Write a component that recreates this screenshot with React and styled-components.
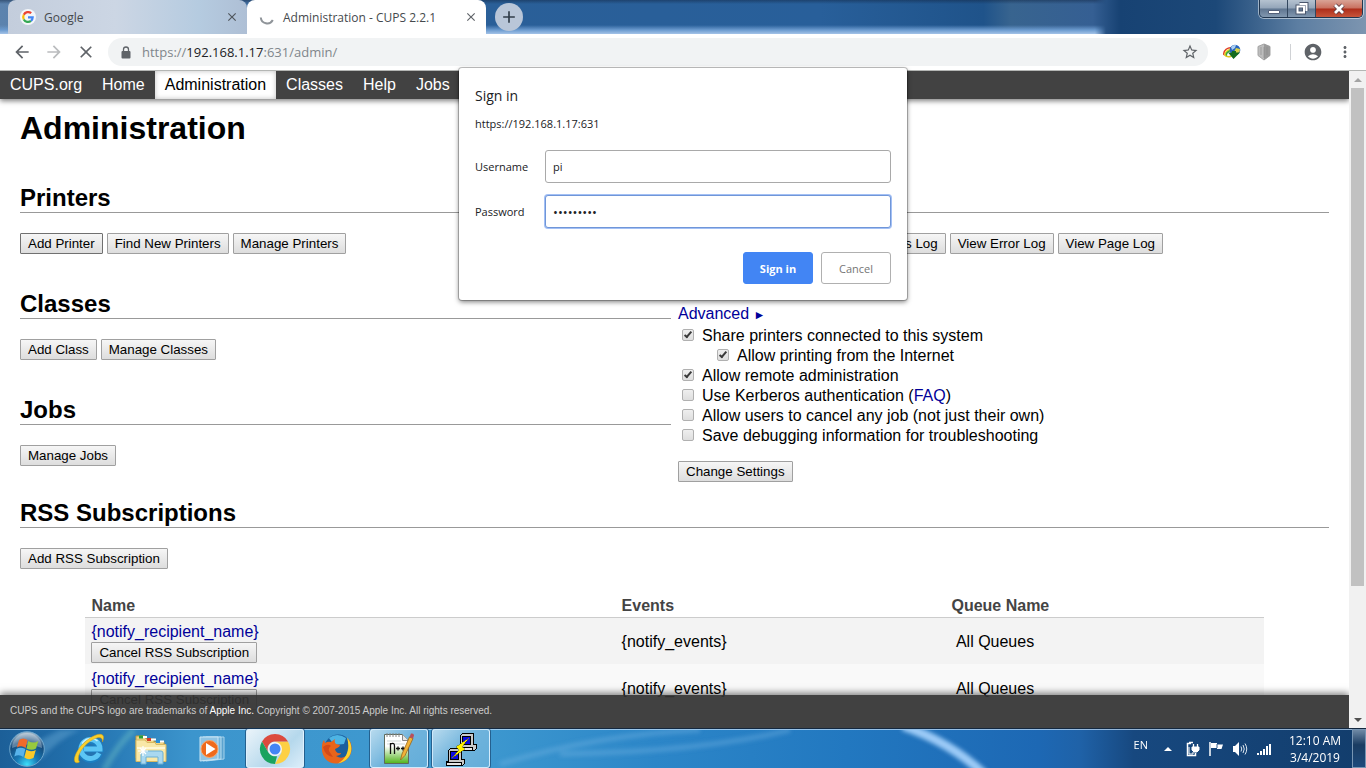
import React from "react";
import styled, { createGlobalStyle, css } from "styled-components";
import {
  MdArrowBack,
  MdArrowForward,
  MdClose,
  MdStarBorder,
  MdAccountCircle,
  MdMoreVert,
  MdAdd,
} from "react-icons/md";

const ui = `"Open Sans", "Noto Sans", sans-serif`;
const sans = `"Liberation Sans", Arial, sans-serif`;

const GlobalStyle = createGlobalStyle`
  *, *::before, *::after { box-sizing: border-box; }
  body { margin: 0; font-family: ${sans}; font-size: 16px; color: #000; background: #fff; }
  h1, h2, p { margin: 0; }
  button, input { font-family: inherit; }
`;

const Desktop = styled.div`
  display: flex;
  flex-direction: column;
  height: 100vh;
  overflow: hidden;
`;

/* ---------- window frame ---------- */

const TitleBar = styled.header`
  display: flex;
  align-items: stretch;
  flex: none;
  height: 34px;
  padding-left: 8px;
  position: relative;
  isolation: isolate;
  font-family: ${ui};
  background: linear-gradient(90deg, #5c83ae 0, #2a5f98 36%, #285f9a 60%, #1f538a 72%, #38648f 74%, #355f93 80%, #174273 82%, #1c4878 89%, #5c7ea2 95%, #7d95b0 100%);
  &::before {
    content: "";
    position: absolute;
    inset: 0 19% 0 0;
    z-index: -1;
    background: linear-gradient(180deg, rgba(20, 40, 70, 0.5) 0, transparent 4px, transparent 25px, #6c9bcf 30px, #a4c3e8 34px);
    mask-image: linear-gradient(90deg, #000 99%, transparent);
  }
`;

const Tab = styled.div`
  display: flex;
  align-items: center;
  gap: 8px;
  width: 239px;
  padding: 0 9px 0 12px;
  font-size: 12px;
  color: #45494d;
  border-radius: 8px 8px 0 0;
  background: ${(p) =>
    p.$active ? "#fff" : "linear-gradient(90deg, #c3cddc, #ccd6e4 45%, #b5cbe0 80%, #aebfd5)"};
  button path { stroke: currentColor; }
`;

const TabTitle = styled.span`
  flex: 1;
  white-space: nowrap;
`;

const IconButton = styled.button`
  display: flex;
  align-items: center;
  justify-content: center;
  flex: none;
  width: ${(p) => p.$size || 20}px;
  height: ${(p) => p.$size || 20}px;
  padding: 0;
  border: 0;
  background: none;
  color: ${(p) => p.$tone || "#5f6368"};
  svg { flex: none; }
`;

const NewTab = styled(IconButton)`
  align-self: center;
  margin-left: 9px;
  border-radius: 50%;
  background: #b9c6d8;
  color: #303c48;
  path { stroke: currentColor; }
`;

const WindowButtons = styled.div`
  display: flex;
  height: 18px;
  margin: 0 3px 0 auto;
  border: 1px solid #21364f;
  border-top: 0;
  border-radius: 0 0 5px 5px;
  box-shadow: 0 0 0 1px rgba(255, 255, 255, 0.5);
  overflow: hidden;
`;

const WindowButton = styled.button`
  display: flex;
  align-items: center;
  justify-content: center;
  width: ${(p) => (p.$close ? 46 : 28)}px;
  padding: 0;
  border: 0;
  border-right: ${(p) => (p.$close ? "0" : "1px solid #33475f")};
  background: ${(p) =>
    p.$close
      ? "linear-gradient(#d9a396, #c9705f 48%, #ad2d1a 52%, #c8553a)"
      : "linear-gradient(#b5c2d0, #93a5b9 48%, #5f7590 52%, #8298b0)"};
`;

/* ---------- browser toolbar ---------- */

const Toolbar = styled.div`
  display: flex;
  align-items: center;
  flex: none;
  height: 37px;
  padding: 0 11px 0 12px;
  background: #fff;
  border-bottom: 1px solid #b4b6b4;
  font-family: ${ui};
`;

const NavButtons = styled.div`
  display: flex;
  gap: 12px;
`;

const Omnibox = styled.div`
  display: flex;
  align-items: center;
  flex: 1;
  height: 28px;
  margin: 0 14px 0 12px;
  padding: 0 8px 0 13px;
  border-radius: 14px;
  background: #f1f3f4;
  color: #5f6368;
`;

const Address = styled.span`
  flex: 1;
  margin-left: 11px;
  font-size: 13px;
  color: #80868b;
  b { font-weight: 400; color: #202124; }
`;

const Extensions = styled.div`
  display: flex;
  align-items: center;
  gap: 12px;
`;

const Divider = styled.span`
  width: 1px;
  height: 16px;
  margin-left: 4px;
  background: #d0d2d5;
`;

/* ---------- page ---------- */

const Viewport = styled.div`
  display: flex;
  flex: 1;
  min-height: 0;
  position: relative;
`;

const Page = styled.div`
  flex: 1;
  min-width: 0;
  position: relative;
  overflow: hidden;
`;

const SiteNav = styled.nav`
  display: flex;
  height: 28px;
  background: #424242;
  box-shadow: 0 2px 5px rgba(0, 0, 0, 0.5);
`;

const NavLink = styled.a`
  padding: 0 10px;
  line-height: 27px;
  text-decoration: none;
  color: ${(p) => (p.$active ? "#000" : "#fff")};
  ${(p) => p.$active && css`background: #fff; box-shadow: inset 0 0 5px rgba(0, 0, 0, 0.25);`}
`;

const Body = styled.main`
  padding: 10px 20px;
`;

const PageTitle = styled.h1`
  font-size: 32px;
  line-height: 39px;
`;

const Columns = styled.div`
  display: grid;
  grid-template-columns: 1fr 1fr;
  gap: 7px;
`;

const Section = styled.section`
  padding-top: ${(p) => (p.$tight ? 16 : 35)}px;
`;

const SectionTitle = styled.h2`
  margin-bottom: 20px;
  border-bottom: 1px solid #999;
  font-size: 24px;
  line-height: 29px;
`;

const ButtonRow = styled.div`
  display: flex;
  gap: 4px;
`;

const PushButton = styled.button`
  display: block;
  height: 21px;
  padding: 0 7px;
  border: 1px solid ${(p) => (p.$focused ? "#707070" : "#a0a0a0")};
  border-radius: 1px;
  background: linear-gradient(#f6f6f6, #dddddd);
  color: #000;
  white-space: nowrap;
`;

const SettingsTitle = styled.p`
  margin-top: 20px;
  font-weight: 700;
  line-height: 29px;
`;

const Link = styled.a`
  color: #009;
  text-decoration: none;
`;

const Advanced = styled.p`
  line-height: 22px;
  span { font-size: 12px; }
`;

const Option = styled.label`
  display: flex;
  gap: 8px;
  padding-left: ${(p) => (p.$nested ? 39 : 4)}px;
  line-height: 20px;
`;

const Check = styled.input`
  appearance: none;
  position: relative;
  flex: none;
  width: 12px;
  height: 12px;
  margin: 3px 0 0;
  border: 1px solid #b0b0b0;
  border-radius: 2px;
  background: linear-gradient(#efefef, #dedede);
  &:checked::after {
    content: "";
    position: absolute;
    left: 3px;
    top: 0;
    width: 4px;
    height: 8px;
    border: solid #3a3a3a;
    border-width: 0 2px 2px 0;
    transform: rotate(40deg);
  }
`;

const SettingsAction = styled.div`
  margin-top: 15px;
`;

const Subscriptions = styled.table`
  width: 90%;
  margin: 26px auto 0;
  border-collapse: collapse;
  table-layout: fixed;
  th {
    height: 22px;
    padding: 0 6px;
    border-bottom: 1px solid #ccc;
    color: #444;
    text-align: left;
    line-height: 20px;
  }
  td {
    height: 47px;
    padding: 4px 6px 1px;
    line-height: 20px;
  }
  tbody tr { background: #f9f9f9; }
  tbody tr:nth-child(odd) { background: #f3f3f3; }
`;

const Column = styled.col`
  width: ${(p) => p.$share}%;
`;

const RecipientLink = styled(Link)`
  display: block;
`;

const SiteFooter = styled.footer`
  position: absolute;
  inset: auto 0 0;
  height: 33px;
  padding: 0 10px;
  background: rgba(51, 51, 51, 0.93);
  box-shadow: 0 -2px 7px rgba(0, 0, 0, 0.5);
  color: #ccc;
  font-size: 10px;
  line-height: 32px;
  a { color: #fff; text-decoration: none; }
`;

const ScrollTrack = styled.div`
  display: flex;
  flex-direction: column;
  flex: none;
  width: 17px;
  background: #f1f1f1;
`;

const ScrollArrow = styled.span`
  display: flex;
  align-items: center;
  justify-content: center;
  flex: none;
  height: 17px;
`;

const ScrollLane = styled.div`
  flex: 1;
  padding: 0 2px;
`;

const ScrollThumb = styled.div`
  height: 80%;
  background: #c1c1c1;
`;

/* ---------- sign-in dialog ---------- */

const Dialog = styled.form`
  position: absolute;
  top: -3px;
  left: 0;
  right: 0;
  width: 448px;
  margin: 0 auto;
  padding: 16px;
  border-radius: 3px;
  background: #fff;
  box-shadow: 0 0 0 1px rgba(0, 0, 0, 0.22), 0 2px 5px rgba(0, 0, 0, 0.5);
  color: #202124;
  font-family: ${ui};
  font-size: 11px;
`;

const DialogTitle = styled.h2`
  font-size: 14px;
  font-weight: 400;
  line-height: 24px;
`;

const Origin = styled.p`
  margin-bottom: 10px;
  line-height: 32px;
`;

const Field = styled.label`
  display: flex;
  align-items: center;
  margin-bottom: 12px;
`;

const FieldName = styled.span`
  width: 70px;
`;

const FieldInput = styled.input`
  flex: 1;
  min-width: 0;
  height: 33px;
  padding: 0 7px;
  border: 1px solid ${(p) => (p.$focused ? "#7096d8" : "#a9a9a9")};
  border-radius: 3px;
  box-shadow: ${(p) => (p.$focused ? "0 0 0 1px #a3c0f5" : "none")};
  font-size: ${(p) => (p.type === "password" ? 13 : 11)}px;
  color: #202124;
  outline: none;
`;

const DialogActions = styled.div`
  display: flex;
  justify-content: flex-end;
  gap: 8px;
  padding-top: 12px;
`;

const DialogButton = styled.button`
  width: 70px;
  height: 32px;
  padding: 0;
  border: 1px solid ${(p) => (p.$primary ? "#4285f4" : "#b0b0b0")};
  border-radius: 3px;
  background: ${(p) => (p.$primary ? "#4285f4" : "#fff")};
  color: ${(p) => (p.$primary ? "#fff" : "#757575")};
  font-size: 11px;
  font-weight: ${(p) => (p.$primary ? 700 : 500)};
`;

/* ---------- taskbar ---------- */

const Taskbar = styled.footer`
  display: flex;
  align-items: stretch;
  flex: none;
  height: 40px;
  position: relative;
  isolation: isolate;
  padding-left: 9px;
  border-top: 1px solid #14283f;
  box-shadow: inset 0 1px 0 rgba(200, 225, 250, 0.7);
  background: linear-gradient(90deg, #1c5f98 0, #2271ae 6%, #3c95cd 14%, #3f9ad0 34%, #2c86c8 48%, #2278c0 62%, #1d68b4 76%, #1f62a8 79%, #17487f 83%, #123d6c 100%);
  font-family: ${ui};
  color: #fff;
`;

const Streaks = styled.svg`
  position: absolute;
  inset: 1px 0 0;
  width: 100%;
  height: 100%;
  z-index: -1;
`;

const StartButton = styled.button`
  align-self: center;
  width: 36px;
  height: 36px;
  margin-right: 15px;
  padding: 0;
  border: 0;
  background: none;
`;

const Tasks = styled.div`
  display: flex;
  flex: 1;
  gap: 4px;
`;

const Task = styled.button`
  display: flex;
  align-items: center;
  justify-content: center;
  width: 58px;
  padding: 0;
  border: 1px solid transparent;
  border-radius: 3px;
  background: none;
  ${(p) =>
    p.$open &&
    css`
      border-color: rgba(225, 242, 255, 0.85);
      box-shadow: 0 0 0 1px rgba(20, 60, 100, 0.6);
      background: ${p.$current
        ? "linear-gradient(135deg, #eaf4fa, #b5d8ec 60%, #dceefa)"
        : "linear-gradient(135deg, #b7daee, #6fb3dc 50%, #63add9)"};
    `}
`;

const Tray = styled.div`
  display: flex;
  align-items: center;
  gap: 8px;
  svg { display: block; }
`;

const Language = styled.span`
  margin: 0 8px 8px 0;
  font-size: 11px;
`;

const HiddenIcons = styled.button`
  width: 8px;
  margin-right: 4px;
  padding: 0;
  border: 0;
  background: none;
`;

const Clock = styled.div`
  width: 68px;
  font-size: 12px;
  line-height: 17px;
  text-align: center;
`;

const ShowDesktop = styled.button`
  width: 14px;
  margin-left: 3px;
  padding: 0;
  border: 1px solid #7795b3;
  background: linear-gradient(#6f89a5, #1a3c62 40%, #1d4a7c);
`;

/* ---------- drawings ---------- */

const GoogleIcon = () => (
  <svg width="16" height="16" viewBox="0 0 16 16">
    <circle cx="8" cy="8" r="8" fill="#f4f6f9" />
    <g fill="none" strokeWidth="2.2">
      <path d="M11.2 4.2A4.8 4.8 0 0 0 3.8 5.8" stroke="#ea4335" />
      <path d="M3.8 5.8a4.8 4.8 0 0 0 0 4.6" stroke="#fbbc05" />
      <path d="M3.8 10.4a4.8 4.8 0 0 0 7.2 1.5" stroke="#34a853" />
      <path d="M11 11.9a4.8 4.8 0 0 0 1.7-3.6H8" stroke="#4285f4" />
    </g>
  </svg>
);

const Spinner = () => (
  <svg width="16" height="16" viewBox="0 0 16 16">
    <path d="M1.8 8.5a6.4 6.4 0 0 0 12 2.6" fill="none" stroke="#8f9499" strokeWidth="2" />
  </svg>
);

const LockIcon = () => (
  <svg width="10" height="13" viewBox="0 0 10 13">
    <path d="M2.500 6V3.500a2.500 2.500 0 0 1 5 0V6" fill="none" stroke="#5f6368" strokeWidth="1.300" />
    <rect x=".5" y="5" width="9" height="7.500" rx="1" fill="#5f6368" />
  </svg>
);

const DownloaderIcon = () => (
  <svg width="18" height="18" viewBox="0 0 18 18">
    <path d="M1 12a7 6 0 0 1 9-7" fill="none" stroke="#e03a20" strokeWidth="1.5" />
    <path d="M2.3 12.6a6 5 0 0 1 7-6" fill="none" stroke="#f0d51c" strokeWidth="1.6" />
    <path d="M3.5 13a5 4 0 0 1 6-5" fill="none" stroke="#38a838" strokeWidth="1.5" />
    <path d="M1.5 12q3 3 7 1" fill="none" stroke="#e0c51c" strokeWidth="1.4" />
    <circle cx="12" cy="7" r="5.3" fill="#2664bd" />
    <path d="M8 4q2-2.500 5-2l-1 3-3 2z" fill="#a9cff3" />
    <path d="M13 5l4 1-.5 3-3 2-2-3z" fill="#d8d24a" />
    <path d="M5 9.500h4V8h4v1.500h4L10.500 16z" fill="#146b1f" />
  </svg>
);

const ShieldIcon = () => (
  <svg width="14" height="18" viewBox="0 0 14 18">
    <path d="M1 3.500 7 1l6 2.500v9L7 17l-6-4.500z" fill="#bdbdbd" stroke="#a4a4a4" />
    <path d="M7 1l6 2.500v9L7 17z" fill="#9b9b9b" />
    <path d="M7 4v11M4 4v8M10 4v8" stroke="#8c8c8c" strokeWidth=".6" />
  </svg>
);

const StartOrb = () => (
  <svg width="36" height="36" viewBox="0 0 36 36">
    <defs>
      <radialGradient id="orb" cx=".5" cy=".95" r=".9">
        <stop offset="0" stopColor="#3de0fb" />
        <stop offset=".35" stopColor="#1879b5" />
        <stop offset=".75" stopColor="#154a7a" />
        <stop offset="1" stopColor="#9ab2c5" />
      </radialGradient>
    </defs>
    <circle cx="18" cy="18" r="17.300" fill="url(#orb)" stroke="#6ea7cd" />
    <path d="M3 17a15 15 0 0 1 30 0q-15-7-30 0z" fill="#fff" opacity=".3" />
    <path d="M10 9q4-3 8.500 0l-1.800 8q-4-3-8.800-.5z" fill="#ef6a2b" />
    <path d="M19.300 10q5 3 10 0l-2.300 7.500q-4 2.500-9.500 0z" fill="#97c93d" />
    <path d="M7.300 18q4-2.500 9 0l-2 8q-4-3-9-.5z" fill="#58b3ea" />
    <path d="M17.300 18.800q4.500 2.700 9.500.2l-2.300 8q-5 2.500-9.200-.5z" fill="#fbc928" />
  </svg>
);

const ExplorerBrowserIcon = () => (
  <svg width="34" height="34" viewBox="0 0 34 34" fill="none">
    <path d="M27.500 21.500A9.500 9.500 0 1 1 28 17H12" stroke="#1c7fc2" strokeWidth="6.500" />
    <path d="M27 21.200A9.500 9.500 0 1 1 28 17H12" stroke="#5cc6f5" strokeWidth="5" />
    <path d="M10 11.500q3.500-5 9-5 4 0 6.500 2.500" stroke="#c4efff" strokeWidth="1.500" />
    <path d="M7.500 30C1 33.500.5 25.500 7 16.500S27-1 31 3.500c1 1.500.5 4-.5 6.500.5-5-3.500-5.500-8.500-3C13 11 3 24 7.500 30z" fill="#f9cf2b" stroke="#d99f10" strokeWidth=".5" />
  </svg>
);

const FolderIcon = () => (
  <svg width="34" height="32" viewBox="0 0 34 32">
    <path d="M2 6V3h9l1 3h8v3h10v16H2z" fill="#f0d585" stroke="#c19b3c" />
    <path d="M5 2.500h4v3H5z" fill="#28a03c" />
    <path d="M13 5h4v3h-4z" fill="#d63a28" />
    <path d="M22 7h4v3h-4z" fill="#2a8fd8" />
    <path d="M9 4h4M17 6.500h5M26 8.500h4" stroke="#fff" strokeWidth="2" />
    <path d="M2 7h9l2 2.500h8l1 2h10v17H2z" fill="#f9e8a8" stroke="#d8b961" />
    <path d="M3 15h28" stroke="#fff7d5" strokeWidth="2" />
    <path d="M7 31V20q0-2 2-2h18q2 0 2 2v11h-5v-7H12v7z" fill="#a9d8f0" stroke="#6bb0d6" />
    <path d="M9 13v10M4 18h10M6 15l6 6M12 15l-6 6" stroke="#fff" strokeWidth="1.200" />
  </svg>
);

const MediaIcon = () => (
  <svg width="30" height="28" viewBox="0 0 30 28">
    <path d="M8 2h18v22L8 26z" fill="#5ba3cf" stroke="#a7d3ec" />
    <path d="M5 2h18v22L5 26z" fill="#72b5dc" stroke="#b6dcf0" />
    <path d="M2 2h18v22L2 26z" fill="#8fc4e4" stroke="#c8e5f4" />
    <circle cx="11.500" cy="14" r="8.500" fill="#ef6a1c" stroke="#f7a76b" />
    <path d="M8 8v12l9.500-6z" fill="#fff" />
  </svg>
);

const ChromeIcon = () => (
  <svg width="32" height="32" viewBox="0 0 32 32">
    <path d="M16 8.500h13A15 15 0 0 1 16 31l6.500-11.200z" fill="#fdd044" />
    <path d="M3 8.500A15 15 0 0 1 29 8.500H16a7.500 7.500 0 0 0-6.500 11.200z" fill="#dc4a3d" />
    <path d="M3 8.500l6.500 11.200q2.500 4 8.500 3.600L16 31A15 15 0 0 1 3 8.500z" fill="#1aa35f" />
    <circle cx="16" cy="16" r="7" fill="#f5f5f5" />
    <circle cx="16" cy="16" r="5.500" fill="#4485f4" />
  </svg>
);

const FirefoxIcon = () => (
  <svg width="32" height="32" viewBox="0 0 32 32">
    <circle cx="17" cy="15" r="13.500" fill="#1b5f9e" />
    <path d="M8 5q8-6 17 0l-2 6-10 1z" fill="#4db4e4" />
    <path d="M27 5c7 9 4 24-11 25.500C6 31 0 23 1 13c0-4 2-6 2-6l1 3q3-2 6-1l4-3q-1 3 1 5l4 1q0 2-5 4 1 5 6 4 0 2-5 3 6 4 11-1c4-5 3-12 1-17.500z" fill="#e8641b" />
    <path d="M26 4.500c8 9 5 23-9 26 10-6 12-16 9-26z" fill="#fbd32d" />
    <path d="M2 14q5-4 8-1-3 2-2 5l4 6q-8-1-10-10z" fill="#d34a18" />
  </svg>
);

const EditorIcon = () => (
  <svg width="32" height="34" viewBox="0 0 32 34">
    <defs>
      <linearGradient id="page" x1="0" y1="0" x2="0" y2="1">
        <stop offset=".4" stopColor="#fff" />
        <stop offset="1" stopColor="#4fb31a" />
      </linearGradient>
    </defs>
    <path d="M1.500 2.500h18l6 6v23h-24z" fill="url(#page)" stroke="#5d6a5d" />
    <path d="M19.500 2.500v6h6" fill="#e6e6e6" stroke="#888" />
    <path d="M4 1v4M7 1v4M10 1v4M13 1v4M16 1v4" stroke="#888" />
    <path d="M4 9h14M4 12h18" stroke="#b9c9c9" strokeWidth=".7" />
    <path d="M7.500 11v11M7.500 12q4-2 4 2v8M13 16.500h4M15 14.500v4M18 16.500h4M20 14.500v4" stroke="#111" strokeWidth="1.300" fill="none" />
    <path d="M17.500 28l1.500-6 7.500-17 3.500 1.500-8 17z" fill="#f1b338" stroke="#98651a" strokeWidth=".8" />
    <path d="M26.500 5L28 1.500q3-.5 3 2L30 6.500z" fill="#b8505a" />
  </svg>
);

const TerminalIcon = () => (
  <svg width="34" height="34" viewBox="0 0 34 34" shapeRendering="crispEdges">
    <g stroke="#000">
      <path d="M16.500 3.500l2-2h11v11h3v4l-2 2h-15v-4h1z" fill="#c9c9c9" />
      <path d="M18.500 4.500h8v8h-8z" fill="#0a0ae0" />
      <path d="M15.500 15.500h13v3h-13z" fill="#e6e6e6" />
      <path d="M4.500 18.500l2-2h11v11h3v4l-2 2h-16v-4h2z" fill="#c9c9c9" />
      <path d="M6.500 19.500h8v8h-8z" fill="#0a0ae0" />
      <path d="M2.500 30.500h15v3h-15z" fill="#e6e6e6" />
    </g>
    <path d="M25 6l-13 9 3 3-7 8 13-9-3-2z" fill="#fff200" stroke="#6c6400" strokeWidth=".5" />
  </svg>
);

const PowerIcon = () => (
  <svg width="16" height="16" viewBox="0 0 16 16" fill="none" stroke="#fff">
    <path d="M7 2.500H3.500v12h8V12M5 1.500h4" strokeWidth="1.500" />
    <path d="M5 6v7h4v-2" />
    <path d="M9.500 3v3M13.500 3v3" strokeWidth="1.300" />
    <path d="M8 6h7v3l-2 2h-3L8 9z" fill="#fff" />
  </svg>
);

const FlagIcon = () => (
  <svg width="16" height="16" viewBox="0 0 16 16">
    <path d="M2 1v14" stroke="#fff" strokeWidth="1.500" />
    <path d="M3 2h6v1.500h6L13.500 8H9V7H3z" fill="#fff" />
    <path d="M9 3v4" stroke="#315d8e" />
  </svg>
);

const VolumeIcon = () => (
  <svg width="16" height="16" viewBox="0 0 16 16">
    <path d="M1 5h2l4-4v14l-4-4H1z" fill="#fff" />
    <path d="M9 5.500q1.500 2.500 0 5M11 4q2.500 4 0 8M13 2.500q3.500 5.500 0 11" fill="none" stroke="#dce6f0" />
  </svg>
);

const SignalIcon = () => (
  <svg width="17" height="16" viewBox="0 0 17 16" fill="#fff">
    <path d="M1 12h2v2H1zM4 10h2v4H4zM7 8h2v6H7zM10 5h2v9h-2zM13 3h2v11h-2z" />
  </svg>
);

/* ---------- composition ---------- */

const navItems = ["CUPS.org", "Home", "Administration", "Classes", "Help", "Jobs"];

const leftSections = [
  { title: "Printers", actions: ["Add Printer", "Find New Printers", "Manage Printers"] },
  { title: "Classes", actions: ["Add Class", "Manage Classes"] },
  { title: "Jobs", actions: ["Manage Jobs"] },
];

const serverActions = ["Edit Configuration File", "View Access Log", "View Error Log", "View Page Log"];

const options = [
  { label: "Share printers connected to this system", on: true },
  { label: "Allow printing from the Internet", on: true, nested: true },
  { label: "Allow remote administration", on: true },
  { label: "Use Kerberos authentication (", link: "FAQ", tail: ")" },
  { label: "Allow users to cancel any job (not just their own)" },
  { label: "Save debugging information for troubleshooting" },
];

const tasks = [
  { name: "Internet Explorer", Icon: ExplorerBrowserIcon },
  { name: "Windows Explorer", Icon: FolderIcon },
  { name: "Media Player", Icon: MediaIcon },
  { name: "Chrome", Icon: ChromeIcon, open: true, current: true },
  { name: "Firefox", Icon: FirefoxIcon },
  { name: "Notepad++", Icon: EditorIcon, open: true },
  { name: "PuTTY", Icon: TerminalIcon, open: true },
];

function ActionSection({ title, actions, tight, children }) {
  return (
    <Section $tight={tight}>
      <SectionTitle>{title}</SectionTitle>
      <ButtonRow>
        {actions.map((a) => (
          <PushButton key={a} $focused={a === "Add Printer"}>{a}</PushButton>
        ))}
      </ButtonRow>
      {children}
    </Section>
  );
}

function ServerSettings() {
  return (
    <>
      <SettingsTitle>Server Settings:</SettingsTitle>
      <Advanced>
        <Link href="#advanced">Advanced <span>►</span></Link>
      </Advanced>
      {options.map((o) => (
        <Option key={o.label} $nested={o.nested}>
          <Check type="checkbox" defaultChecked={o.on} />
          <span>
            {o.label}
            {o.link && <Link href="#faq">{o.link}</Link>}
            {o.tail}
          </span>
        </Option>
      ))}
      <SettingsAction>
        <PushButton>Change Settings</PushButton>
      </SettingsAction>
    </>
  );
}

function SignIn() {
  return (
    <Dialog role="dialog" aria-label="Sign in" onSubmit={(e) => e.preventDefault()}>
      <DialogTitle>Sign in</DialogTitle>
      <Origin>https://192.168.1.17:631</Origin>
      <Field>
        <FieldName>Username</FieldName>
        <FieldInput type="text" defaultValue="pi" />
      </Field>
      <Field>
        <FieldName>Password</FieldName>
        <FieldInput type="password" defaultValue="raspberry" $focused />
      </Field>
      <DialogActions>
        <DialogButton $primary type="submit">Sign in</DialogButton>
        <DialogButton type="button">Cancel</DialogButton>
      </DialogActions>
    </Dialog>
  );
}

export default function App() {
  return (
    <Desktop>
      <GlobalStyle />
      <TitleBar>
        <Tab>
          <GoogleIcon />
          <TabTitle>Google</TabTitle>
          <IconButton $size={12} $tone="#50565c" aria-label="Close tab"><MdClose size={14} /></IconButton>
        </Tab>
        <Tab $active>
          <Spinner />
          <TabTitle>Administration - CUPS 2.2.1</TabTitle>
          <IconButton $size={12} aria-label="Close tab"><MdClose size={14} /></IconButton>
        </Tab>
        <NewTab $size={28} aria-label="New tab"><MdAdd size={20} /></NewTab>
        <WindowButtons>
          <WindowButton aria-label="Minimize">
            <svg width="14" height="12"><path d="M1.500 7.500h11v3h-11z" fill="#fff" stroke="#53607a" /></svg>
          </WindowButton>
          <WindowButton aria-label="Restore">
            <svg width="14" height="13" fill="none">
              <path d="M4.500 2h7v7M2.500 4.500h6.500v6h-6.500z" stroke="#4a566c" strokeWidth="4" />
              <path d="M4.500 2h7v7M2.500 4.500h6.500v6h-6.500z" stroke="#fff" strokeWidth="2" />
            </svg>
          </WindowButton>
          <WindowButton $close aria-label="Close">
            <svg width="14" height="12">
              <path d="M3 2l8 8M11 2l-8 8" stroke="#5a3a42" strokeWidth="4.500" />
              <path d="M3 2l8 8M11 2l-8 8" stroke="#fff" strokeWidth="2.800" />
            </svg>
          </WindowButton>
        </WindowButtons>
      </TitleBar>

      <Toolbar>
        <NavButtons>
          <IconButton aria-label="Back"><MdArrowBack size={20} /></IconButton>
          <IconButton $tone="#babcbe" aria-label="Forward"><MdArrowForward size={20} /></IconButton>
          <IconButton aria-label="Stop"><MdClose size={20} /></IconButton>
        </NavButtons>
        <Omnibox>
          <LockIcon />
          <Address>https://<b>192.168.1.17</b>:631/admin/</Address>
          <IconButton aria-label="Bookmark"><MdStarBorder size={18} /></IconButton>
        </Omnibox>
        <Extensions>
          <IconButton aria-label="Download manager"><DownloaderIcon /></IconButton>
          <IconButton aria-label="Shield"><ShieldIcon /></IconButton>
          <Divider />
          <IconButton aria-label="Profile"><MdAccountCircle size={20} /></IconButton>
          <IconButton aria-label="Menu"><MdMoreVert size={18} /></IconButton>
        </Extensions>
      </Toolbar>

      <Viewport>
        <Page>
          <SiteNav>
            {navItems.map((n) => (
              <NavLink key={n} href={`#${n}`} $active={n === "Administration"}>{n}</NavLink>
            ))}
          </SiteNav>
          <Body>
            <PageTitle>Administration</PageTitle>
            <Columns>
              <div>
                {leftSections.map((s) => <ActionSection key={s.title} {...s} />)}
              </div>
              <ActionSection title="Server" actions={serverActions}>
                <ServerSettings />
              </ActionSection>
            </Columns>
            <ActionSection title="RSS Subscriptions" actions={["Add RSS Subscription"]} tight />
            <Subscriptions>
              <colgroup>
                <Column $share={45} />
                <Column $share={28} />
                <Column $share={27} />
              </colgroup>
              <thead>
                <tr><th>Name</th><th>Events</th><th>Queue Name</th></tr>
              </thead>
              <tbody>
                {[1, 2].map((n) => (
                  <tr key={n}>
                    <td>
                      <RecipientLink href="#rss">{"{notify_recipient_name}"}</RecipientLink>
                      <PushButton>Cancel RSS Subscription</PushButton>
                    </td>
                    <td>{"{notify_events}"}</td>
                    <td>&nbsp;All Queues</td>
                  </tr>
                ))}
              </tbody>
            </Subscriptions>
          </Body>
          <SiteFooter>
            CUPS and the CUPS logo are trademarks of <a href="#apple">Apple Inc.</a> Copyright © 2007-2015 Apple
            Inc. All rights reserved.
          </SiteFooter>
        </Page>
        <ScrollTrack>
          <ScrollArrow>
            <svg width="8" height="4"><path d="M0 4l4-4 4 4z" fill="#a3a3a3" /></svg>
          </ScrollArrow>
          <ScrollLane><ScrollThumb /></ScrollLane>
          <ScrollArrow>
            <svg width="8" height="4"><path d="M0 0l4 4 4-4z" fill="#505050" /></svg>
          </ScrollArrow>
        </ScrollTrack>
        <SignIn />
      </Viewport>

      <Taskbar>
        <Streaks viewBox="0 0 1366 39" preserveAspectRatio="none">
          <defs>
            <filter id="soft"><feGaussianBlur stdDeviation="2" /></filter>
          </defs>
          <g filter="url(#soft)" fill="none">
            <path d="M40 30Q60 8 80 0H60Q48 6 40 10z" fill="#8cc6ea" opacity=".3" />
            <path d="M104 40Q118 14 134 0" stroke="#7fd0c8" strokeWidth="6" opacity=".35" />
            <path d="M500 34Q600 4 700 0M560 24Q700 22 790 0" stroke="#7dbbe8" strokeWidth="5" opacity=".35" />
            <path d="M903-4Q950 12 984 44" stroke="#9ccbf7" strokeWidth="9" />
          </g>
        </Streaks>
        <StartButton aria-label="Start"><StartOrb /></StartButton>
        <Tasks>
          {tasks.map(({ name, Icon, open, current }) => (
            <Task key={name} $open={open} $current={current} aria-label={name}><Icon /></Task>
          ))}
        </Tasks>
        <Tray>
          <Language>EN</Language>
          <HiddenIcons aria-label="Show hidden icons">
            <svg width="8" height="16"><path d="M0 10l4-4 4 4z" fill="#fff" /></svg>
          </HiddenIcons>
          <PowerIcon />
          <FlagIcon />
          <VolumeIcon />
          <SignalIcon />
          <Clock>12:10 AM<br />3/4/2019</Clock>
        </Tray>
        <ShowDesktop aria-label="Show desktop" />
      </Taskbar>
    </Desktop>
  );
}
